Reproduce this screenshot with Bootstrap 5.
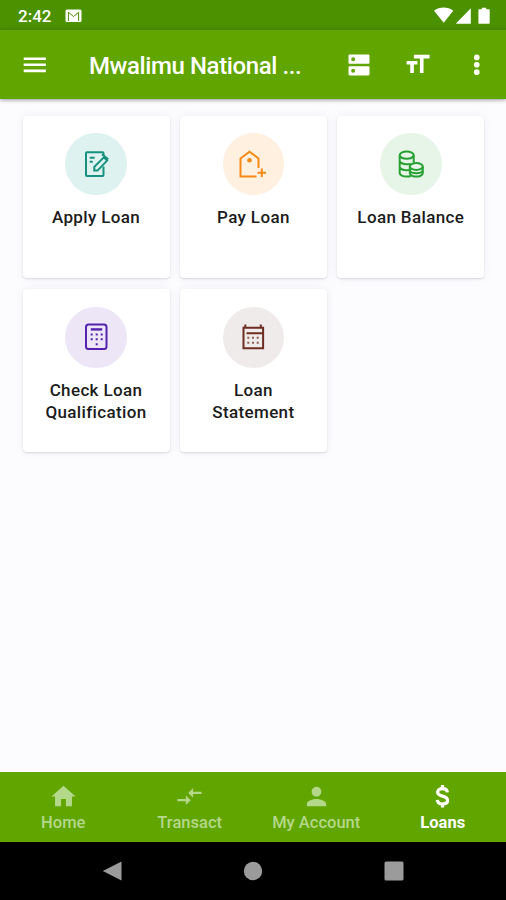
<!DOCTYPE html>
<html lang="en">
<head>
<meta charset="utf-8">
<meta name="viewport" content="width=device-width, initial-scale=1">
<title>Mwalimu National – Loans</title>
<link href="https://cdn.jsdelivr.net/npm/bootstrap@5.3.0/dist/css/bootstrap.min.css" rel="stylesheet">
<style>
body{font-family:Roboto,"Liberation Sans",sans-serif;background:#fcfcff;width:506px;height:900px;overflow:hidden}
svg{display:block;flex:none}
.status-bar{height:30px;background:#4b9100;padding:2px 16px 0 18px;font-size:17px;font-weight:500;line-height:1}
.mail{margin-left:14px}
.app-bar{height:68.5px;background:#60a500;padding:1px 14.5px 0 20px;box-shadow:0 1px 4px rgba(0,0,0,.4);z-index:1}
.app-title{font-size:24px;font-weight:500;margin:2px 0 0 39.5px;width:242px;letter-spacing:-.4px;line-height:1}
.tools{gap:30px}
.tiles{padding:17px 21px 0 22.5px;display:grid;grid-template-columns:repeat(3,147px);column-gap:10.4px;row-gap:11px}
.tile{height:162.5px;border:0;border-radius:4px;background:#fff;box-shadow:0 1px 2px rgba(40,40,60,.16),0 0 11px rgba(60,60,90,.05);padding-top:17.5px}
.disc{width:61.5px;height:61.5px}
.tile-label{font-size:17px;font-weight:500;line-height:22.3px;margin-top:11px;color:#1c1c1c;letter-spacing:.36px}
.disc svg{fill:none;stroke:currentColor;stroke-width:2}
.teal{background:#def2ef;color:#16917f}
.amber{background:#fff0df;color:#f58a14}
.leaf{background:#e7f5e9;color:#27a032}
.violet{background:#ece6f7;color:#5423ad}
.brown{background:#efebea;color:#6d2d21}
.bottom-bar{height:70px;background:#60a500;color:#b4d88a;font-size:16.5px;font-weight:500;padding-top:10px}
.bottom-bar .tab{line-height:1;gap:3.5px;letter-spacing:.02px}
.bottom-bar .on{color:#fff;font-weight:700}
.sys-bar{height:58px;background:#000;padding-left:102px;padding-right:102px}
</style>
<script src="https://cdn.jsdelivr.net/npm/bootstrap@5.3.0/dist/js/bootstrap.bundle.min.js"></script>
</head>
<body class="d-flex flex-column">
<header class="status-bar d-flex align-items-center text-white flex-shrink-0">
  <span>2:42</span>
  <svg class="mail" width="17" height="14" viewBox="0 0 17 14"><rect x=".5" y=".5" width="16" height="12.600" rx="1.500" fill="#fff"/><path d="M3.400 12V3.200l5.100 4.300 5.100-4.300V12" fill="none" stroke="#4b9100" stroke-width="1"/></svg>
  <svg class="ms-auto" width="56" height="18" viewBox="0 0 56 18" fill="#fff"><path d="M0 3.700C5.500-.6 13.800-.6 19.300 3.700L9.700 15.700zM22.200 16.700V16.200L36.800 1.300V16.700zM47.800.7h4.400v1.500h2.500c.6 0 1 .4 1 1v12.500c0 .6-.4 1-1 1h-9.300c-.6 0-1-.4-1-1V3.200c0-.6.4-1 1-1h2.400z"/></svg>
</header>
<nav class="app-bar d-flex align-items-center text-white flex-shrink-0 position-relative">
  <svg width="29.500" height="29.500" viewBox="0 0 24 24" fill="#fff"><path d="M3 18h18v-2.200H3zM3 13.100h18v-2.200H3zM3 6v2.200h18V6z"/></svg>
  <h1 class="app-title text-nowrap mb-0">Mwalimu National ...</h1>
  <div class="tools d-flex align-items-center ms-auto">
    <svg width="28" height="28" viewBox="0 0 24 24" fill="#fff"><path fill-rule="evenodd" d="M20 13H4c-.55 0-1 .45-1 1v6c0 .55.45 1 1 1h16c.55 0 1-.45 1-1v-6c0-.55-.45-1-1-1zM7 18.700a1.700 1.700 0 1 1 0-3.400 1.700 1.700 0 0 1 0 3.400zM20 3H4c-.55 0-1 .45-1 1v6c0 .55.45 1 1 1h16c.55 0 1-.45 1-1V4c0-.55-.45-1-1-1zM7 8.700a1.700 1.700 0 1 1 0-3.400 1.700 1.700 0 0 1 0 3.400z"/></svg>
    <svg width="29" height="29" viewBox="0 0 24 24" fill="#fff"><path d="M9 4v3h5v12h3V7h5V4zM3 12h3v7h3v-7h3V9H3z"/></svg>
    <svg width="29.500" height="29.500" viewBox="0 0 24 24" fill="#fff"><circle cx="12" cy="6" r="2.300"/><circle cx="12" cy="12" r="2.300"/><circle cx="12" cy="18" r="2.300"/></svg>
  </div>
</nav>
<main class="flex-grow-1">
  <div class="tiles">
    <a class="card tile align-items-center text-center text-decoration-none">
      <span class="disc teal rounded-circle d-flex align-items-center justify-content-center"><svg width="30" height="30" viewBox="0 0 30 30"><path d="M22.500 7V4.200a1 1 0 0 0-1-1H6a1 1 0 0 0-1 1V26a1 1 0 0 0 1 1h15.500a1 1 0 0 0 1-1v-8.500M8.700 8.800h5M8.700 12.800h3"/><path d="M13.300 21.600v-3.800L22.800 8.300l3.300 3.300L16.500 21.600zM21 5.300l6.300 4.900"/></svg></span>
      <span class="tile-label">Apply Loan</span>
    </a>
    <a class="card tile align-items-center text-center text-decoration-none">
      <span class="disc amber rounded-circle d-flex align-items-center justify-content-center"><svg width="30" height="30" viewBox="0 0 30 30"><path d="M18.500 27.500H2.500V9.500l9-6.800 9 6.800V19M23.800 19.500v8.500M19.500 23.800h8.600"/><circle cx="11.500" cy="11.300" r="2.300" fill="currentColor" stroke="none"/></svg></span>
      <span class="tile-label">Pay Loan</span>
    </a>
    <a class="card tile align-items-center text-center text-decoration-none">
      <span class="disc leaf rounded-circle d-flex align-items-center justify-content-center"><svg width="30" height="30" viewBox="0 0 30 30"><ellipse cx="10.700" cy="6.200" rx="7" ry="3.600"/><path d="M3.700 6.200V24c0 2 3.200 3.600 7 3.600 1.500 0 2.900-.2 4-.6M17.700 6.200v7M3.700 11.700c0 2 3.200 3.600 7 3.600 1.500 0 2.900-.2 4-.6M3.700 17.700c0 2 3.200 3.600 7 3.600 1.100 0 2.200-.1 3.100-.4"/><ellipse cx="20.300" cy="17.500" rx="6.500" ry="3.400"/><path d="M13.800 17.500V24c0 2 2.900 3.600 6.500 3.600s6.500-1.600 6.500-3.600v-6.500M13.800 20.800c0 2 2.900 3.500 6.500 3.500s6.500-1.500 6.500-3.500"/></svg></span>
      <span class="tile-label">Loan Balance</span>
    </a>
    <a class="card tile align-items-center text-center text-decoration-none">
      <span class="disc violet rounded-circle d-flex align-items-center justify-content-center"><svg width="30" height="30" viewBox="0 0 30 30"><rect x="5" y="2.500" width="20.500" height="24.500" rx="2.500"/><path d="M9.800 7.400h11.400" stroke-width="2.400"/><path d="M9.700 12.500h2m3 0h2m3 0h2M9.700 17.200h2m3 0h2m3 0h2M14.700 22.200h2"/></svg></span>
      <span class="tile-label">Check Loan<br>Qualification</span>
    </a>
    <a class="card tile align-items-center text-center text-decoration-none">
      <span class="disc brown rounded-circle d-flex align-items-center justify-content-center"><svg width="30" height="30" viewBox="0 0 30 30"><path d="M5.500 5.800h19.600v20.400H5.500zM7.300 2.500v3M22.800 2.500v3M8.500 11.200h16"/><path stroke-width="1.900" opacity=".75" d="M9.300 15.800h2m2.700 0h2m2.700 0h2M9.300 20.700h2m2.700 0h2m2.700 0h2"/></svg></span>
      <span class="tile-label">Loan<br>Statement</span>
    </a>
  </div>
</main>
<nav class="bottom-bar row g-0 flex-shrink-0">
  <div class="col tab d-flex flex-column align-items-center"><svg width="29" height="29" viewBox="0 0 24 24" fill="currentColor"><path d="M10 20v-6h4v6h5v-8h3L12 3 2 12h3v8z"/></svg><span>Home</span></div>
  <div class="col tab d-flex flex-column align-items-center"><svg width="29" height="29" viewBox="0 0 24 24" fill="currentColor"><path d="M9.010 14H2v2h7.010v3L13 15l-3.990-4zM14.990 13v-3H22V8h-7.010V5L11 9z"/></svg><span>Transact</span></div>
  <div class="col tab d-flex flex-column align-items-center"><svg width="31" height="29" viewBox="0 0 24 24" fill="currentColor"><path d="M12 12c2.210 0 4-1.790 4-4s-1.790-4-4-4-4 1.790-4 4 1.790 4 4 4zm0 2c-2.670 0-8 1.340-8 4v2h16v-2c0-2.660-5.330-4-8-4z"/></svg><span>My Account</span></div>
  <div class="col tab on d-flex flex-column align-items-center"><svg width="29" height="29" viewBox="0 0 24 24" fill="none" stroke="currentColor" stroke-width="2.700"><path d="M16 8.600C15.800 6.500 14.200 5.400 12 5.400S8 6.500 8 8.400c0 4.200 8.200 2.300 8.200 6.700 0 2-1.700 3.100-4.100 3.100-2.600 0-4.200-1.200-4.400-3.400M12 2.400v3M12 18v3.200"/></svg><span>Loans</span></div>
</nav>
<footer class="sys-bar d-flex align-items-center justify-content-between flex-shrink-0">
  <svg width="20" height="22" viewBox="0 0 20 22" fill="#9b9b9b"><path d="M19.500 1.500v19L.8 11z"/></svg>
  <svg width="20" height="20" viewBox="0 0 20 20" fill="#9b9b9b"><circle cx="10" cy="10" r="9.200"/></svg>
  <svg width="20" height="20" viewBox="0 0 20 20" fill="#9b9b9b"><rect x=".5" y=".5" width="19" height="19" rx="1.500"/></svg>
</footer>
</body>
</html>
